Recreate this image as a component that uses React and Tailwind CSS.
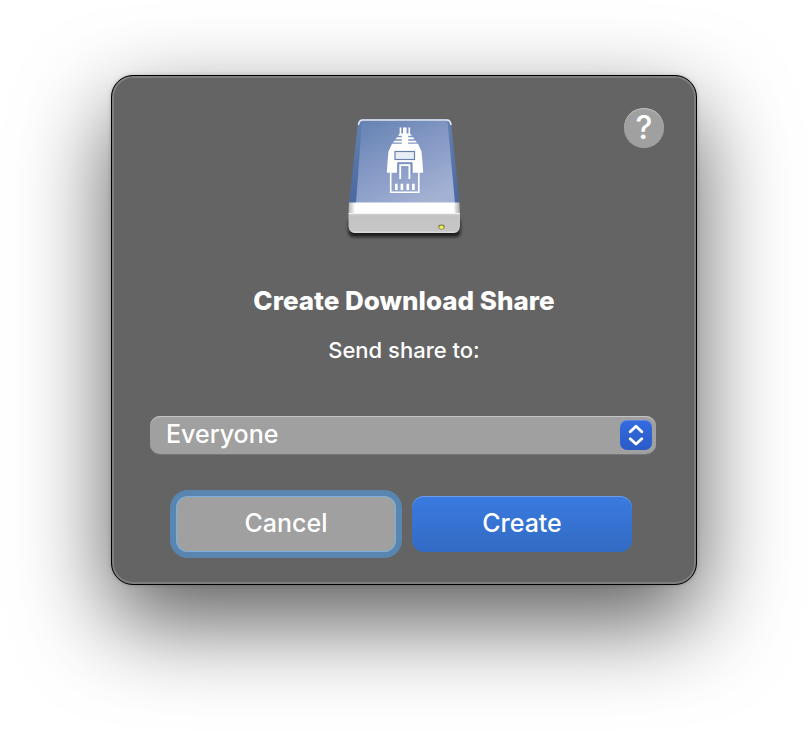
import { useState } from "react";

function NetworkDriveIcon() {
  return (
    <svg viewBox="0 0 128 128" className="size-32" aria-hidden="true">
      <defs>
        <linearGradient id="lid" x1="0.1" y1="0" x2="0.7" y2="1">
          <stop offset="0" stopColor="#6684b4" />
          <stop offset="0.45" stopColor="#8498c4" />
          <stop offset="1" stopColor="#a3b1d3" />
        </linearGradient>
        <linearGradient id="edge" x1="0" y1="0" x2="0" y2="1">
          <stop offset="0" stopColor="#6480b0" />
          <stop offset="1" stopColor="#4a699f" />
        </linearGradient>
        <linearGradient id="band" x1="0" y1="0" x2="1" y2="0">
          <stop offset="0" stopColor="#b5b5b5" />
          <stop offset="0.06" stopColor="#ffffff" />
          <stop offset="0.94" stopColor="#ffffff" />
          <stop offset="1" stopColor="#a5a5a5" />
        </linearGradient>
        <linearGradient id="front" x1="0" y1="0" x2="0" y2="1">
          <stop offset="0" stopColor="#d6d6d6" />
          <stop offset="0.15" stopColor="#c3c3c3" />
          <stop offset="0.88" stopColor="#c6c6c6" />
          <stop offset="1" stopColor="#e0e0e0" />
        </linearGradient>
        <filter id="soft" x="-10%" y="-50%" width="120%" height="200%">
          <feGaussianBlur stdDeviation="1.8" />
        </filter>
      </defs>
      <rect x="8.500" y="106" width="112" height="19" rx="5" fill="#101010" opacity="0.8" filter="url(#soft)" />
      <path d="M22 7H108Q110.500 7 111 10L119.500 91H9L18 10Q18.500 7 22 7Z" fill="url(#edge)" />
      <path d="M22 9H107.500L115 91H16Z" fill="url(#lid)" />
      <path d="M18.500 13Q19 8 23 8H106.500Q110.500 8 111 13" fill="none" stroke="#e6e8ee" strokeWidth="1.600" />
      <path d="M9 90.500H119.500L120 102H8.500Z" fill="url(#band)" />
      <path d="M8.500 101H120V114Q119.500 121 114 121H14.500Q9 121 8.500 114Z" fill="url(#front)" />
      <path d="M9 101.500H119.500" stroke="#f5f5f5" strokeWidth="1" />
      <ellipse cx="101.500" cy="115" rx="3.200" ry="2.400" fill="#77773a" />
      <ellipse cx="101.500" cy="115.200" rx="2.200" ry="1.700" fill="#f2ee5a" />
      <g fill="#ffffff">
        <path d="M59.700 15.500H61.300V22H59.700ZM63 15.500H66.600V22H63ZM68.500 15.500H70.100V22H68.500Z" />
        <path d="M59.700 21.500H70L72 23.800H58Z" />
        <path d="M57 25.200H73L74.500 27.200H55.500Z" />
        <path d="M54.500 28.700H75.500L77 30.500H53Z" />
        <path d="M61.800 22H68.200V34H61.800Z" />
        <path d="M52 31.800H78L81.500 39.500Q82.600 50 83.200 60.800H72.500V50.500H57.500V60.800H46.800Q47.400 50 48.500 39.500Z" />
      </g>
      <rect x="55" y="39.500" width="19.500" height="8" fill="#e9edf6" stroke="#6a81b0" strokeWidth="1.200" />
      <path d="M50.700 60.500V80.300H78.800V60.500" fill="none" stroke="#ffffff" strokeWidth="1.600" />
      <path d="M57.800 61.500V50.800H71.800V61.500" fill="none" stroke="#7189b8" strokeWidth="1" />
      <path d="M60.200 67V53.200H69.400V67" fill="none" stroke="#ffffff" strokeWidth="1.800" />
      <path d="M56.300 71.800V78M61.900 71.800V78M67.800 71.800V78M73.400 71.800V78" stroke="#ffffff" strokeWidth="2.600" />
    </svg>
  );
}

function Stepper() {
  return (
    <span className="pointer-events-none absolute inset-y-1 right-1 flex w-8 items-center justify-center rounded-[7px] bg-linear-to-b from-[#346bdf] to-[#2a5cc8] shadow-[inset_0_1px_0_rgba(255,255,255,0.2)]">
      <svg viewBox="0 0 32 30" className="h-[30px] w-8" fill="none" stroke="#ffffff" strokeWidth="2.800" strokeLinecap="round" strokeLinejoin="round" aria-hidden="true">
        <path d="M10.200 11.700L16 6.300L21.800 11.700M10.200 18.700L16 24.100L21.800 18.700" />
      </svg>
    </span>
  );
}

export default function App() {
  const [recipient, setRecipient] = useState("Everyone");

  return (
    <main className="flex min-h-screen items-start justify-center overflow-hidden bg-white px-4 pt-[75px] pb-36 font-['Inter','Liberation_Sans',sans-serif] text-white">
      <section
        role="dialog"
        aria-labelledby="dialog-title"
        className="w-full max-w-[586px] rounded-[22px] border border-black bg-[#646464] pb-8 shadow-[inset_0_0_0_2px_#7e7e7e,0_36px_92px_rgba(0,0,0,0.65),0_0_4px_rgba(0,0,0,0.2)]"
      >
        <header className="grid grid-cols-[1fr_auto_1fr] items-start px-8 pt-8">
          <div className="col-start-2 pt-1">
            <NetworkDriveIcon />
          </div>
          <button
            type="button"
            aria-label="Help"
            className="flex size-10 items-center justify-center justify-self-end rounded-full bg-[#a0a0a0] text-[32px] leading-10 font-medium shadow-[inset_0_1px_0_#bdbdbd]"
          >
            ?
          </button>
        </header>

        <h1 id="dialog-title" className="mt-[45px] text-center text-[26px] leading-8 font-extrabold">
          Create Download Share
        </h1>
        <label htmlFor="recipient" className="mt-[19px] block text-center text-[22px] leading-7 font-medium">
          Send share to:
        </label>

        <div className="relative mr-10 ml-[38px] mt-13">
          <select
            id="recipient"
            value={recipient}
            onChange={(event) => setRecipient(event.target.value)}
            className="block h-[38px] w-full appearance-none rounded-[10px] bg-[#a0a0a0] pr-12 pb-[2px] pl-4 text-[25px] leading-9 font-medium shadow-[inset_0_1px_0_#c4c4c4,0_1px_0_#767676] outline-none"
          >
            <option>Everyone</option>
          </select>
          <Stepper />
        </div>

        <div className="mx-16 mt-[42px] grid grid-cols-2 gap-4 text-[25px] leading-8 font-medium">
          <button
            type="button"
            className="h-14 rounded-[12px] bg-[#a0a0a0] pb-[2px] shadow-[inset_0_0_0_1px_#7aafe0] ring-6 ring-[#5886b0]"
          >
            Cancel
          </button>
          <button
            type="button"
            className="h-14 rounded-[12px] bg-linear-to-b from-[#3a7ae0] to-[#326bc4] pb-[2px] shadow-[inset_0_1px_0_#6a9ce8]"
          >
            Create
          </button>
        </div>
      </section>
    </main>
  );
}
